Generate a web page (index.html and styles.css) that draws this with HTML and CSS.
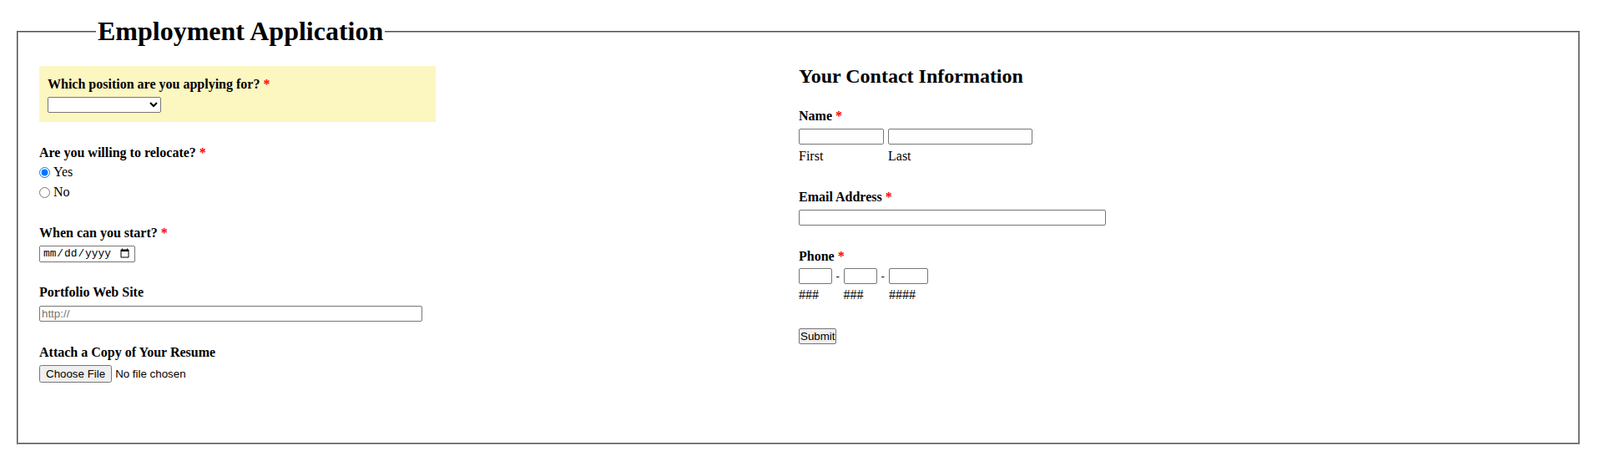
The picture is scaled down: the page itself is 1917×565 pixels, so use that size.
FILE: index.html
```html
<!DOCTYPE html>
<html lang="en">
<head>
<meta charset="utf-8">
<title>Employment Application</title>
<link rel="stylesheet" href="styles.css">
</head>
<body>
<form class="app-form">
  <fieldset class="app-fieldset">
    <legend class="app-legend">Employment Application</legend>
    <div class="columns">
      <div class="col col-left">
        <div class="field highlight">
          <label class="title" for="position">Which position are you applying for? <span class="req">*</span></label>
          <select id="position" class="ctl select-pos"><option></option></select>
        </div>
        <div class="field">
          <div class="title title-radios">Are you willing to relocate? <span class="req">*</span></div>
          <div class="radios">
            <label class="radio-row"><input type="radio" name="relocate" checked> Yes</label>
            <label class="radio-row"><input type="radio" name="relocate"> No</label>
          </div>
        </div>
        <div class="field">
          <label class="title" for="start">When can you start? <span class="req">*</span></label>
          <input id="start" type="date" class="ctl date">
        </div>
        <div class="field">
          <label class="title title-url" for="site">Portfolio Web Site</label>
          <input id="site" type="text" class="ctl text url" placeholder="http://">
        </div>
        <div class="field">
          <label class="title" for="resume">Attach a Copy of Your Resume</label>
          <input id="resume" type="file" class="file">
        </div>
      </div>
      <div class="col col-right">
        <h2 class="section-title">Your Contact Information</h2>
        <div class="rfield rfield-name">
          <div class="title rtitle">Name <span class="req">*</span></div>
          <div class="group">
            <span class="part"><input type="text" class="ctl text w-first"><span class="sub">First</span></span>
            <span class="part"><input type="text" class="ctl text w-last"><span class="sub">Last</span></span>
          </div>
        </div>
        <div class="rfield rfield-email">
          <label class="title rtitle" for="email">Email Address <span class="req">*</span></label>
          <input id="email" type="text" class="ctl text w-email">
        </div>
        <div class="rfield rfield-phone">
          <div class="title rtitle rtitle-phone">Phone <span class="req">*</span></div>
          <div class="group">
            <span class="part"><input type="text" class="ctl text w-ph3"><span class="sub">###</span></span>
            <span class="dash">-</span>
            <span class="part"><input type="text" class="ctl text w-ph3"><span class="sub">###</span></span>
            <span class="dash dash-wide">-</span>
            <span class="part"><input type="text" class="ctl text w-ph4"><span class="sub">####</span></span>
          </div>
        </div>
        <div class="submit-row">
          <button type="button" class="submit">Submit</button>
        </div>
      </div>
    </div>
  </fieldset>
</form>
</body>
</html>
```

FILE: styles.css
```css
html, body {
  background: #ffffff;
}

body {
  margin: 8px;
  font-family: "Liberation Serif", "Times New Roman", serif;
  font-size: 16px;
  color: #000;
}

.app-form {
  margin: 0;
}

.app-fieldset {
  margin: 11px 16px 0 12px;
  padding: 0 24px 45px 25px;
  min-width: 0;
  border: 2px groove #a4a4a4;
}

.app-legend {
  font-size: 32px;
  font-weight: bold;
  padding: 0 2px;
  margin-left: 68px;
}

.columns {
  display: grid;
  grid-template-columns: 1fr 1fr;
  align-items: start;
}

.col-left {
  padding-top: 23.2px;
}

.field {
  margin-bottom: 27.5px;
}

.title {
  display: block;
  font-weight: bold;
  margin-bottom: 6px;
}

.title-radios {
  margin-bottom: 0;
}

.title-url {
  margin-bottom: 7px;
}

.req {
  color: #ff0000;
}

.highlight {
  width: 475px;
  box-sizing: border-box;
  background: #fcf6c1;
  padding: 12.5px 10px 11.5px;
}

.ctl {
  display: block;
  box-sizing: border-box;
  font-family: "Liberation Sans", Arial, sans-serif;
  font-size: 13.333px;
  margin: 0;
}

.text {
  height: 19px;
  padding: 1px 2px;
  border: 1px solid #767676;
  border-radius: 2px;
  background: #fff;
}

.text::placeholder {
  color: #757575;
}

.select-pos {
  width: 136px;
  height: 19px;
}

.radios {
  margin-top: 2.4px;
  display: flex;
  flex-direction: column;
}

.radio-row {
  display: flex;
  align-items: center;
  height: 24px;
  gap: 4px;
}

.radio-row input {
  margin: 0;
  width: 13px;
  height: 13px;
}

.date {
  width: 115px;
  height: 20px;
  padding: 1px 2px;
  font-family: "Liberation Mono", "Courier New", monospace;
  font-size: 12.8px;
}

.url {
  width: 459px;
}

.file {
  display: block;
  margin: 0;
  font-family: "Liberation Sans", Arial, sans-serif;
  font-size: 13.333px;
}

/* right column */
.section-title {
  font-size: 24px;
  font-weight: bold;
  margin: 22.3px 0 25.2px;
}

.rtitle {
  margin-bottom: 6px;
}

.rtitle-phone {
  margin-bottom: 5.5px;
}

.group {
  display: flex;
  align-items: flex-start;
}

.rfield-name .group {
  gap: 5px;
}

.part {
  display: flex;
  flex-direction: column;
}

.sub {
  margin-top: 4.9px;
}

.rfield-phone .sub {
  margin-top: 4px;
}

.w-first { width: 102px; }
.w-last { width: 173px; }
.w-email { width: 368px; }
.w-ph3 { width: 40px; }
.w-ph4 { width: 47px; }

.dash {
  width: 13.5px;
  text-align: center;
  font-family: "Liberation Sans", Arial, sans-serif;
  font-size: 13.333px;
  line-height: 19px;
}

.dash-wide {
  width: 14.5px;
}

.rfield-email {
  margin-top: 30.4px;
}

.rfield-phone {
  margin-top: 28px;
}

.submit-row {
  margin-top: 30.5px;
}

.submit {
  box-sizing: border-box;
  height: 19px;
  padding: 0 1px;
  font-family: "Liberation Sans", Arial, sans-serif;
  font-size: 13.333px;
  border: 1px solid #767676;
  border-radius: 2px;
  background: #efefef;
  color: #000;
}
```
